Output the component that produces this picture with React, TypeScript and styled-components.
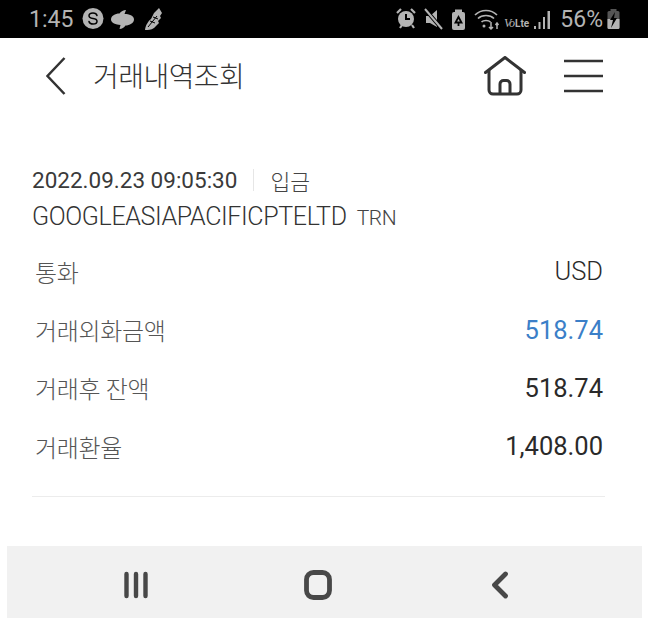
import styled, { createGlobalStyle } from "styled-components"

const GlobalStyle = createGlobalStyle`
  html, body {
    margin: 0;
    padding: 0;
    background: #fff;
  }
`

const Page = styled.div`
  width: 648px;
  height: 618px;
  display: flex;
  flex-direction: column;
  overflow: hidden;
  background: #fff;
  font-family: Roboto, "Noto Sans CJK KR", sans-serif;
`

const StatusBar = styled.div`
  height: 38px;
  flex: none;
  background: #000;
  color: #b4b4b4;
  display: flex;
  align-items: center;
  justify-content: space-between;
  padding: 0 28px 0 29px;
`

const StatusGroup = styled.div`
  display: flex;
  align-items: center;
`

const Clock = styled.span`
  font-size: 23px;
  margin-right: 9px;
`

const Percent = styled.span`
  font-size: 23px;
  margin: 0 4px 0 4px;
`

const Header = styled.header`
  height: 76px;
  flex: none;
  display: flex;
  align-items: center;
  padding: 0 45px 0 46px;
`

const Title = styled.h1`
  flex: 1;
  margin: -3px 0 0 27px;
  font-size: 28px;
  font-weight: 300;
  letter-spacing: -0.55px;
  color: #333;
`

const HeaderActions = styled.div`
  display: flex;
  align-items: center;
  gap: 38px;
`

const Content = styled.main`
  flex: 1;
  padding: 51px 43px 0 32px;
`

const DateRow = styled.div`
  display: flex;
  align-items: center;
  height: 30px;
  font-size: 22.5px;
  color: #3a3a3a;
`

const Divider = styled.span`
  width: 1px;
  height: 22px;
  margin: 0 16px;
  background: #e6e6e6;
`

const Kind = styled.span`
  font-weight: 300;
  font-size: 21.5px;
  color: #444;
`

const Merchant = styled.div`
  height: 36px;
  line-height: 36px;
  margin-top: 4px;
  font-size: 25px;
  font-weight: 300;
  letter-spacing: -0.37px;
  color: #333;
`

const MerchantCode = styled.span`
  font-size: 21px;
  margin-left: 10px;
  color: #444;
`

const Rows = styled.div`
  padding: 7px 0 20px 3px;
  border-bottom: 1px solid #ececec;
`

const Row = styled.div`
  height: 58.4px;
  display: flex;
  align-items: center;
  justify-content: space-between;
  padding-right: 2px;
`

const Label = styled.span`
  font-size: 24px;
  font-weight: 300;
  letter-spacing: -0.35px;
  color: #555;
`

const Value = styled.span<{ $accent?: boolean; $muted?: boolean }>`
  font-size: 25.5px;
  font-weight: ${(p) => (p.$muted ? 300 : 400)};
  color: ${(p) => (p.$accent ? "#3b7fc8" : "#2a2a2a")};
`

const NavBar = styled.nav`
  height: 72px;
  flex: none;
  margin: 0 6px 0 7px;
  padding-left: 38px;
  background: #f1f1f1;
  display: grid;
  grid-template-columns: repeat(3, 182px);
  align-items: center;
`

const NavSlot = styled.div`
  display: flex;
  justify-content: center;
  padding-top: 6px;
`

const rows = [
  { label: "통화", value: "USD", muted: true },
  { label: "거래외화금액", value: "518.74", accent: true },
  { label: "거래후 잔액", value: "518.74" },
  { label: "거래환율", value: "1,408.00" },
]

export default function App() {
  return (
    <Page>
      <GlobalStyle />
      <StatusBar>
        <StatusGroup>
          <Clock>1:45</Clock>
          <svg width="82" height="24" viewBox="0 0 82 24">
            <circle cx="11" cy="11.500" r="10.500" fill="#b4b4b4" />
            <path d="M15 8.500c-.5-2-2-2.500-4-2.500s-4 .8-4 2.800 2 2.500 4 2.700 4 .8 4 2.800-2 2.800-4 2.800-3.500-.7-4-2.600" fill="none" stroke="#000" strokeWidth="1.500" strokeLinecap="round" />
            <path d="M29 12.500c0-3.500 4-6 8.500-6 1.500-2 4-3.500 6.500-3.500l-1.500 4c4.500 0 9.500 1.500 9.500 5.500 0 3.500-4.500 6-8.500 6-1.500 2-3.500 3.500-6 3.500l1-4c-4.500-.5-9.500-2-9.500-5.500z" fill="#b4b4b4" />
            <path d="M63 23c.5-5 3.500-9 6-11l3-6 5-5 3 5-2 3 1 2-3 3 1 2-5 5c-3 2-6 2-9 2z" fill="#b4b4b4" />
            <path d="M66 20l9-11M68 14l5 2M71 10l5 2" stroke="#000" strokeWidth="1" />
          </svg>
        </StatusGroup>
        <StatusGroup>
          <svg width="160" height="24" viewBox="0 0 160 24">
            <circle cx="10" cy="12" r="8" fill="#b4b4b4" />
            <path d="M10 7v5h4" fill="none" stroke="#000" strokeWidth="2" />
            <path d="M1 6l4-4M19 6l-4-4M4 21l2-3M16 18l2 3" stroke="#b4b4b4" strokeWidth="2.200" />
            <path d="M30 9h4l7-6v17l-7-4h-4z" fill="#b4b4b4" />
            <path d="M29 2l17 20" stroke="#000" strokeWidth="4" />
            <path d="M29 2l17 20" stroke="#b4b4b4" strokeWidth="2" />
            <rect x="56" y="5" width="13" height="18" rx="2" fill="#b4b4b4" />
            <rect x="59" y="2.500" width="7" height="3" fill="#b4b4b4" />
            <path d="M62.500 10l3 5.500h-6z" fill="none" stroke="#000" strokeWidth="1.800" />
            <path d="M62.500 15v4" stroke="#000" strokeWidth="1.800" />
            <path d="M79 8c6-6 16-6 22 0M82 11.500c4-4 12-4 16 0M85.500 15c2-2 7-2 9 0" fill="none" stroke="#b4b4b4" strokeWidth="1.700" />
            <circle cx="88" cy="19" r="1.500" fill="#b4b4b4" />
            <path d="M95 15v7M93 20l2 2 2-2M101 22v-6M99.500 18l1.500-2 1.500 2" fill="none" stroke="#b4b4b4" strokeWidth="1.500" />
            <text x="108" y="20" fill="#b4b4b4" fontSize="12" fontStyle="italic" letterSpacing="-1" fontFamily="'Liberation Serif', serif">Vo</text>
            <text x="119" y="20" fill="#b4b4b4" fontSize="10" fontWeight="700" fontFamily="Roboto, sans-serif">Lte</text>
            <rect x="138" y="19" width="2" height="3" fill="#b4b4b4" />
            <rect x="142.500" y="15" width="2" height="7" fill="#b4b4b4" />
            <rect x="147" y="10" width="2" height="12" fill="#b4b4b4" />
            <rect x="151.500" y="4" width="2.500" height="18" fill="#b4b4b4" />
          </svg>
          <Percent>56%</Percent>
          <svg width="13" height="24" viewBox="0 0 13 24">
            <rect x="3.500" y="2" width="6" height="3" fill="#555" />
            <rect x="0.500" y="4" width="12" height="18" rx="1.500" fill="#555" />
            <path d="M0.500 12h12v8.500a1.500 1.500 0 0 1-1.500 1.500H2a1.500 1.500 0 0 1-1.500-1.500z" fill="#b4b4b4" />
            <path d="M8 5L3 13h3l-2 8 6-10H7z" fill="#000" />
          </svg>
        </StatusGroup>
      </StatusBar>

      <Header>
        <svg width="20" height="38" viewBox="0 0 20 38">
          <path d="M18.500 1L1.500 19l17 18" fill="none" stroke="#333" strokeWidth="2.500" />
        </svg>
        <Title>거래내역조회</Title>
        <HeaderActions>
          <svg width="42" height="40" viewBox="0 0 42 40">
            <path d="M1.500 16.500L21 1.500l19.500 15" fill="none" stroke="#333" strokeWidth="3" strokeLinecap="round" strokeLinejoin="round" />
            <path d="M5 14v20a4 4 0 0 0 4 4h24a4 4 0 0 0 4-4V14" fill="none" stroke="#333" strokeWidth="3" />
            <path d="M16 38V28a3.500 3.500 0 0 1 3.500-3.500h3a3.500 3.500 0 0 1 3.500 3.500v10" fill="none" stroke="#333" strokeWidth="3" />
          </svg>
          <svg width="39" height="34" viewBox="0 0 39 34">
            <path d="M0 2h39M0 17h39M0 32h39" stroke="#333" strokeWidth="2.400" />
          </svg>
        </HeaderActions>
      </Header>

      <Content>
        <DateRow>
          2022.09.23 09:05:30
          <Divider />
          <Kind>입금</Kind>
        </DateRow>
        <Merchant>
          GOOGLEASIAPACIFICPTELTD<MerchantCode>TRN</MerchantCode>
        </Merchant>
        <Rows>
          {rows.map((row) => (
            <Row key={row.label}>
              <Label>{row.label}</Label>
              <Value $accent={row.accent} $muted={row.muted}>{row.value}</Value>
            </Row>
          ))}
        </Rows>
      </Content>

      <NavBar>
        <NavSlot>
          <svg width="26" height="28" viewBox="0 0 26 28">
            <path d="M3.500 3v22M13 3v22M22.500 3v22" stroke="#484848" strokeWidth="4.400" strokeLinecap="round" />
          </svg>
        </NavSlot>
        <NavSlot>
          <svg width="28" height="30" viewBox="0 0 28 30">
            <rect x="2.500" y="2.500" width="23" height="25" rx="7" fill="none" stroke="#484848" strokeWidth="4.800" />
          </svg>
        </NavSlot>
        <NavSlot>
          <svg width="20" height="28" viewBox="0 0 20 28">
            <path d="M15.500 3L4.500 14l11 11" fill="none" stroke="#484848" strokeWidth="4.800" strokeLinecap="round" strokeLinejoin="round" />
          </svg>
        </NavSlot>
      </NavBar>
    </Page>
  )
}
